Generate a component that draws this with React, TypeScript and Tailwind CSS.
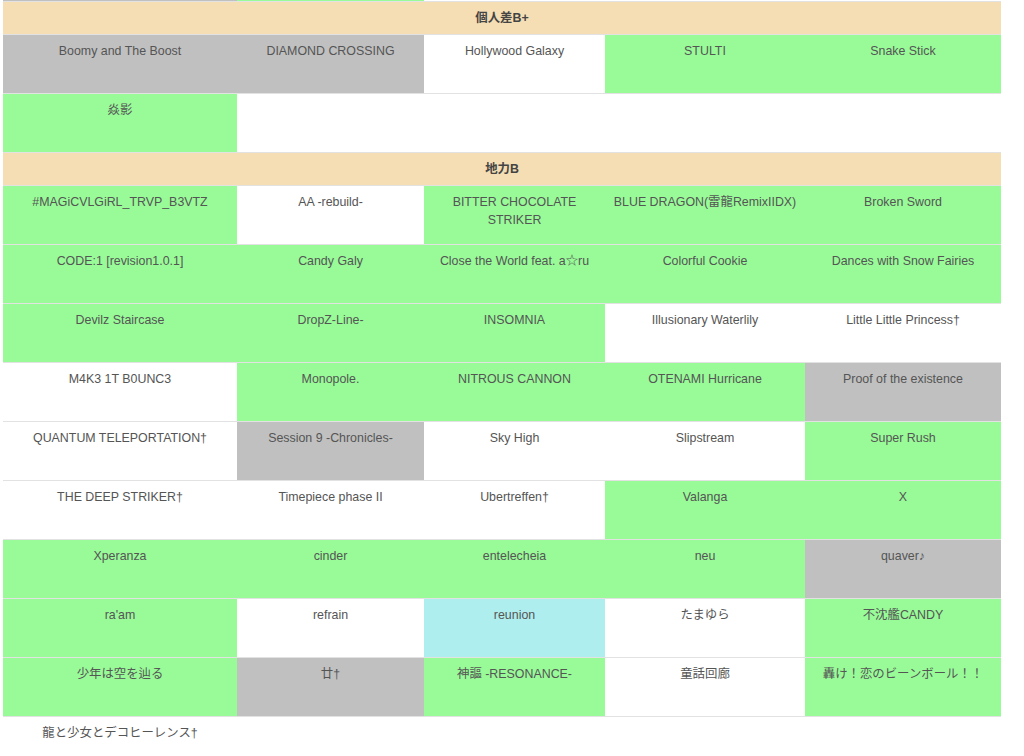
type Tone = 'g' | 'w' | 's' | 'b'

type Cell = { t: string; c: Tone }

const toneClass: Record<Tone, string> = {
  g: 'bg-[#98fb98]',
  w: 'bg-white',
  s: 'bg-[#c0c0c0]',
  b: 'bg-[#afeeee]',
}

const cols = 'grid grid-cols-[234px_187px_181px_200px_196px]'

const sections: { title: string; rows: Cell[][] }[] = [
  {
    title: '個人差B+',
    rows: [
      [
        { t: 'Boomy and The Boost', c: 's' },
        { t: 'DIAMOND CROSSING', c: 's' },
        { t: 'Hollywood Galaxy', c: 'w' },
        { t: 'STULTI', c: 'g' },
        { t: 'Snake Stick', c: 'g' },
      ],
      [
        { t: '焱影', c: 'g' },
        { t: '', c: 'w' },
        { t: '', c: 'w' },
        { t: '', c: 'w' },
        { t: '', c: 'w' },
      ],
    ],
  },
  {
    title: '地力B',
    rows: [
      [
        { t: '#MAGiCVLGiRL_TRVP_B3VTZ', c: 'g' },
        { t: 'AA -rebuild-', c: 'w' },
        { t: 'BITTER CHOCOLATE STRIKER', c: 'g' },
        { t: 'BLUE DRAGON(雷龍RemixIIDX)', c: 'g' },
        { t: 'Broken Sword', c: 'g' },
      ],
      [
        { t: 'CODE:1 [revision1.0.1]', c: 'g' },
        { t: 'Candy Galy', c: 'g' },
        { t: 'Close the World feat. a☆ru', c: 'g' },
        { t: 'Colorful Cookie', c: 'g' },
        { t: 'Dances with Snow Fairies', c: 'g' },
      ],
      [
        { t: 'Devilz Staircase', c: 'g' },
        { t: 'DropZ-Line-', c: 'g' },
        { t: 'INSOMNIA', c: 'g' },
        { t: 'Illusionary Waterlily', c: 'w' },
        { t: 'Little Little Princess†', c: 'w' },
      ],
      [
        { t: 'M4K3 1T B0UNC3', c: 'w' },
        { t: 'Monopole.', c: 'g' },
        { t: 'NITROUS CANNON', c: 'g' },
        { t: 'OTENAMI Hurricane', c: 'g' },
        { t: 'Proof of the existence', c: 's' },
      ],
      [
        { t: 'QUANTUM TELEPORTATION†', c: 'w' },
        { t: 'Session 9 -Chronicles-', c: 's' },
        { t: 'Sky High', c: 'w' },
        { t: 'Slipstream', c: 'w' },
        { t: 'Super Rush', c: 'g' },
      ],
      [
        { t: 'THE DEEP STRIKER†', c: 'w' },
        { t: 'Timepiece phase II', c: 'w' },
        { t: 'Ubertreffen†', c: 'w' },
        { t: 'Valanga', c: 'g' },
        { t: 'X', c: 'g' },
      ],
      [
        { t: 'Xperanza', c: 'g' },
        { t: 'cinder', c: 'g' },
        { t: 'entelecheia', c: 'g' },
        { t: 'neu', c: 'g' },
        { t: 'quaver♪', c: 's' },
      ],
      [
        { t: "ra'am", c: 'g' },
        { t: 'refrain', c: 'w' },
        { t: 'reunion', c: 'b' },
        { t: 'たまゆら', c: 'w' },
        { t: '不沈艦CANDY', c: 'g' },
      ],
      [
        { t: '少年は空を辿る', c: 'g' },
        { t: '廿†', c: 's' },
        { t: '神謳 -RESONANCE-', c: 'g' },
        { t: '童話回廊', c: 'w' },
        { t: '轟け！恋のビーンボール！！', c: 'g' },
      ],
      [
        { t: '龍と少女とデコヒーレンス†', c: 'w' },
        { t: '', c: 'w' },
        { t: '', c: 'w' },
        { t: '', c: 'w' },
        { t: '', c: 'w' },
      ],
    ],
  },
]

function Row({ cells }: { cells: Cell[] }) {
  return (
    <div className={`${cols} border-b border-[#e2e2e2]`}>
      {cells.map((cell, i) => (
        <div
          key={i}
          className={`${toneClass[cell.c]} h-[58px] px-[6px] pt-[7px] text-center text-[12.4px] leading-[18px] text-[#555]`}
        >
          {cell.t}
        </div>
      ))}
    </div>
  )
}

export default function App() {
  return (
    <div
      className="min-h-[756px] bg-white"
      style={{ fontFamily: '"Liberation Sans", Arial, "Noto Sans CJK JP", sans-serif' }}
    >
      <div className="ml-[3px] w-[998px]">
        {/* tail of the previous row, scrolled off the top */}
        <div className={`${cols} h-[2px] border-b border-[#e2e2e2]`}>
          <div className="bg-[#c0c0c0]" />
          <div className="bg-[#98fb98]" />
          <div className="bg-white" />
          <div className="bg-white" />
          <div className="bg-white" />
        </div>

        {sections.map((s) => (
          <div key={s.title}>
            <div className="flex h-[33px] items-center justify-center border-b border-[#e2e2e2] bg-[#f5deb3] text-[12.4px] font-bold text-[#444]">
              {s.title}
            </div>
            {s.rows.map((r, i) => (
              <Row key={i} cells={r} />
            ))}
          </div>
        ))}
      </div>
    </div>
  )
}
